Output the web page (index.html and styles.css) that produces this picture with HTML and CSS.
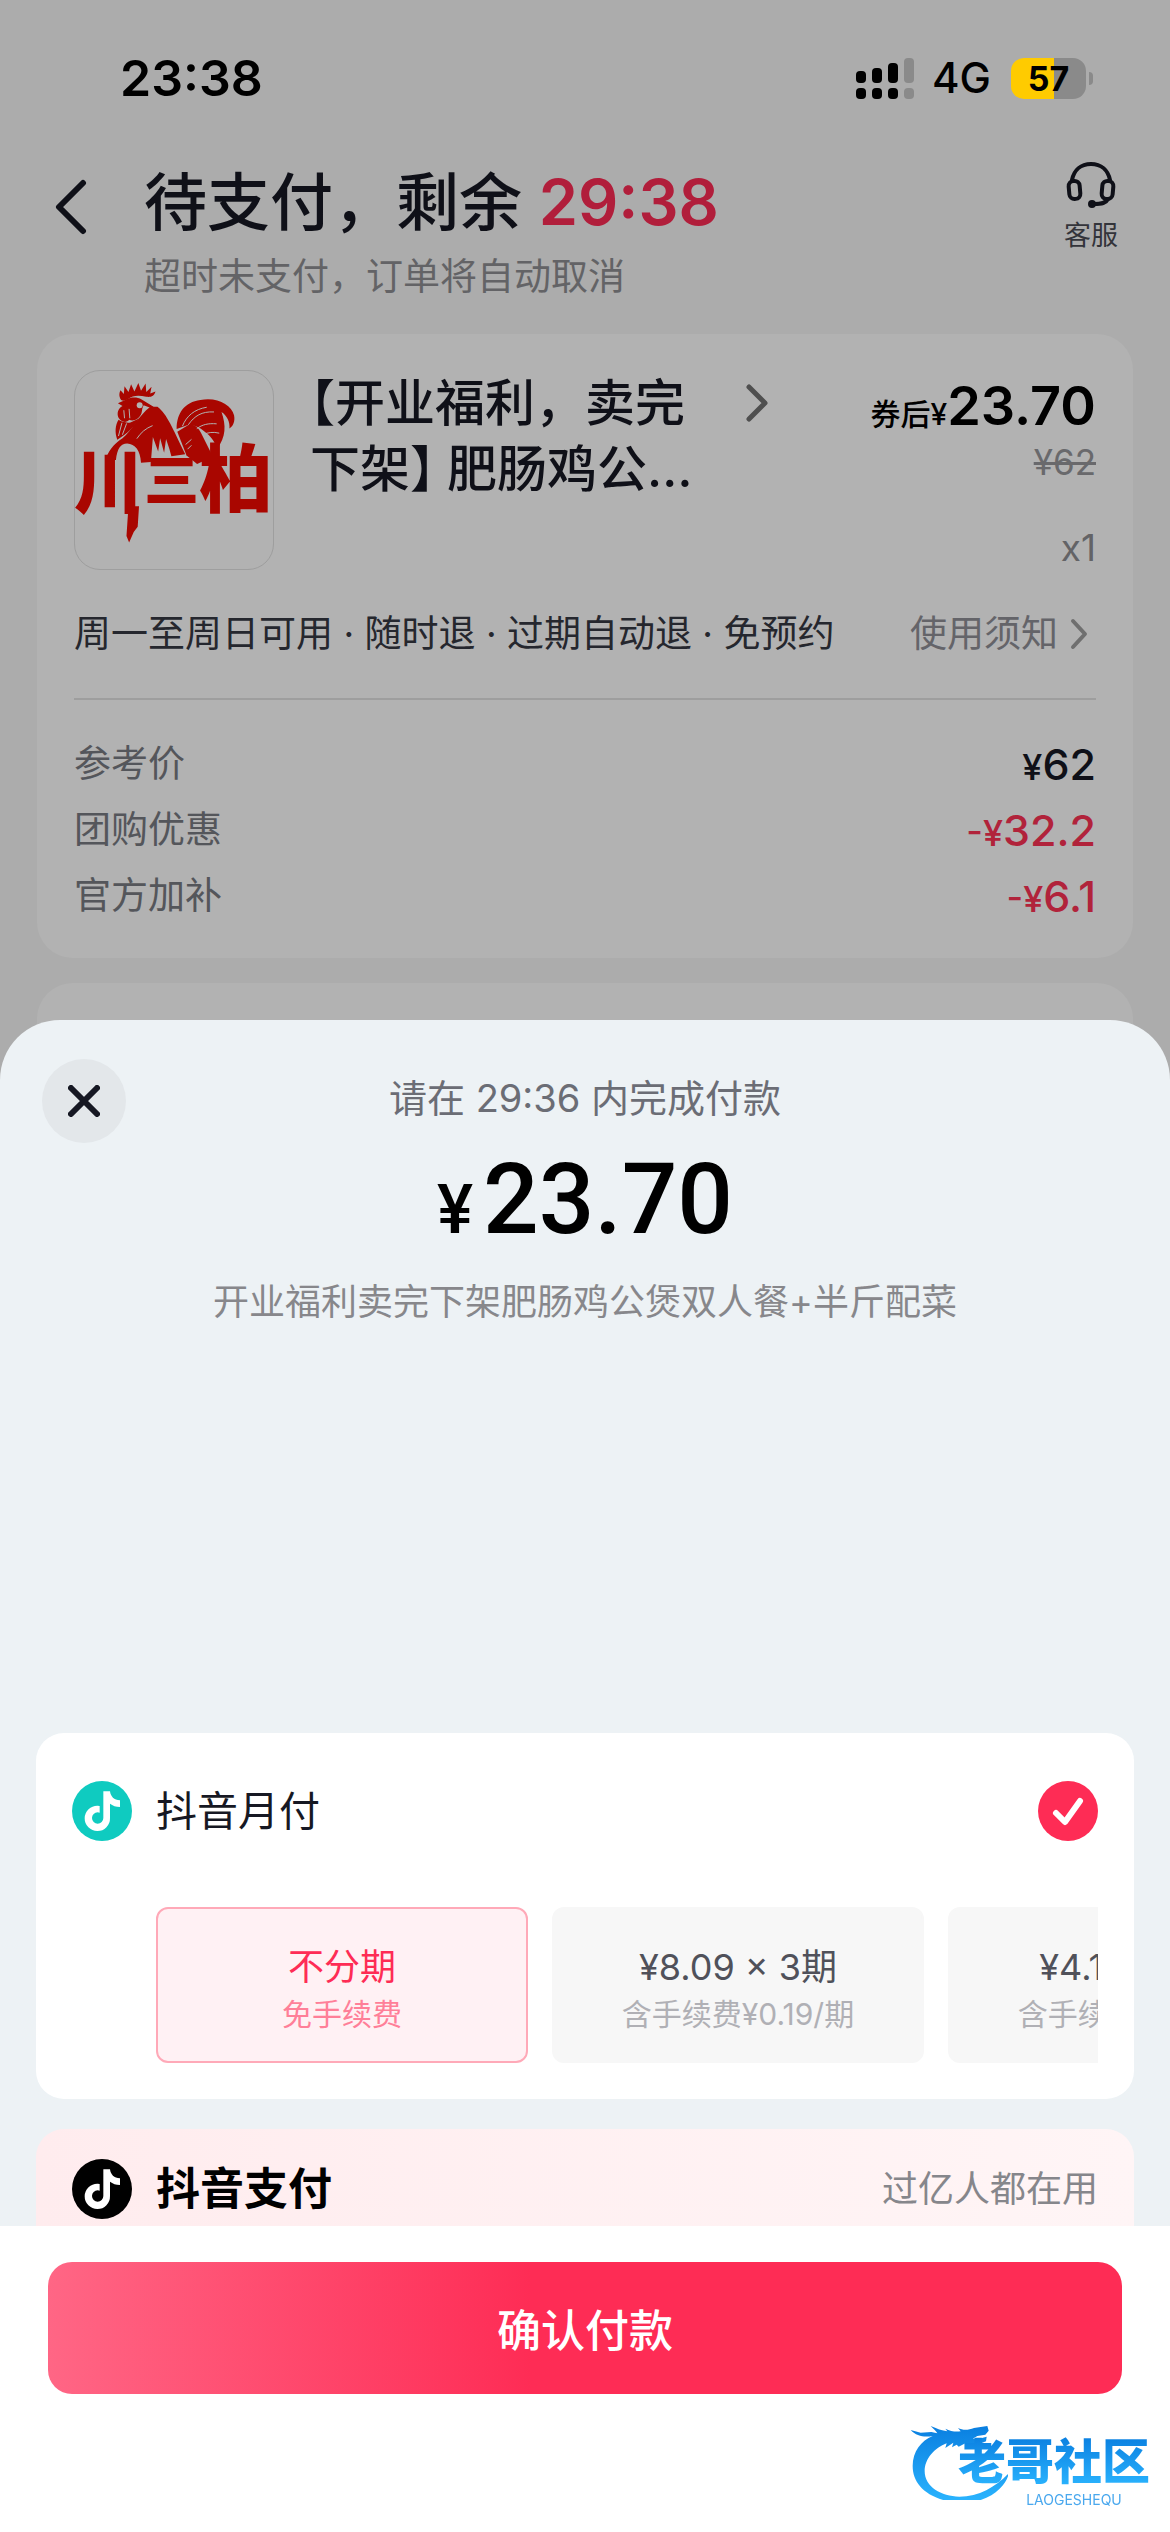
FILE: index.html
```html
<!DOCTYPE html>
<html lang="zh-CN">
<head>
  <meta charset="UTF-8" />
  <meta name="viewport" content="width=device-width, initial-scale=1.0"/>
  <title>待支付</title>
  <link rel="stylesheet" href="styles.css">
</head>
<body>

  <div class="order">
    <div class="status">
      <span class="time">23:38</span>
      <div class="status-right">
        <svg width="58" height="41" viewBox="0 0 58 41">
          <g fill="#000">
            <rect x="0" y="13" width="10" height="12" rx="4"/>
            <rect x="0" y="30" width="10" height="11" rx="4"/>
            <rect x="16" y="10" width="10" height="15" rx="4"/>
            <rect x="16" y="30" width="10" height="11" rx="4"/>
            <rect x="32" y="5" width="10" height="20" rx="4"/>
            <rect x="32" y="30" width="10" height="11" rx="4"/>
          </g>
          <g fill="#8a8a8a">
            <rect x="48" y="0" width="10" height="25" rx="4"/>
            <rect x="48" y="30" width="10" height="11" rx="4"/>
          </g>
        </svg>
        <span class="network">4G</span>
        <div class="battery">57</div>
      </div>
    </div>

    <header class="header">
      <button class="back" aria-label="返回">
        <svg width="32" height="56" viewBox="0 0 32 56" fill="none" stroke="#161823" stroke-width="6" stroke-linecap="round" stroke-linejoin="round"><path d="M28 4L4 28l24 24"/></svg>
      </button>
      <div class="header-text">
        <h1>待支付，剩余 <span class="countdown">29:38</span></h1>
        <p>超时未支付，订单将自动取消</p>
      </div>
      <a class="service" href="#">
        <svg width="50" height="48" viewBox="0 0 50 48" fill="none" stroke="#161823" stroke-width="4" stroke-linecap="round">
          <path d="M6 18C8 8 15 2 25 2s17 6 19 16"/>
          <rect x="3" y="19" width="11" height="18" rx="5" transform="rotate(-5 8 28)"/>
          <rect x="36" y="19" width="11" height="18" rx="5" transform="rotate(5 42 28)"/>
          <path d="M42 37c-2 4-6 5-14 5"/>
          <circle cx="26" cy="42" r="2"/>
        </svg>
        <span>客服</span>
      </a>
    </header>

    <section class="card">
      <div class="product">
        <svg class="thumb" viewBox="40 30 600 600">
          <g fill="#f30a00">
            <!-- comb and head -->
            <path d="M180 118c-8-12-6-22-2-30l10 12 2-24 12 18 8-24 10 22 12-26 8 24 14-22 2 26 16-16-4 20 16-6c-4 14-14 18-28 16-24-6-42-4-54 6-8 6-16 8-22 4z"/>
            <path d="M170 128l26-12c14-8 32-8 46 0l36 22-8 4-22-8c-8 14-2 26-14 36-10 10-20 12-30 8-8 10-24 8-32-6-6-14-2-28 12-36z"/>
            <path d="M172 178c10 6 22 10 36 8l26-12c-12 22-34 46-66 64-8-22-6-44 4-60z"/>
            <!-- body -->
            <path d="M132 302c8-28 24-50 52-68 30-26 46-66 84-96h22c30 24 44 62 84 144l-42 6-6-22-10-30-6 42-12-44-6 40-16-44-6 76-30 2c-2-38-18-56-42-58-20 0-30 16-34 50z"/>
            <!-- tail -->
            <path d="M348 206c0-48 24-82 72-88 50-10 94 14 102 46 4 20-4 34-14 40 2-18-6-38-24-50 14 40 14 76-14 112-4-16-14-34-32-48-16-14-34-26-56-24z"/>
            <path d="M350 214l36-22c18 0 28 10 36 26l36 72-48 22-32-26z"/>
          </g>
          <g fill="none" stroke="#fff" stroke-width="3" stroke-linecap="round">
            <path d="M366 196c12-30 36-50 72-56"/>
            <path d="M384 192c18-26 40-40 76-38"/>
            <path d="M410 204c16-12 34-16 58-14"/>
            <path d="M430 222c14-6 28-8 46-4"/>
            <path d="M228 234c12-18 26-30 46-38"/>
            <path d="M376 252l16-14M382 266l10-10"/>
            <path d="M182 188l-10 38M196 190l-12 32M188 150l2 22M204 146l2 26"/>
          </g>
          <circle cx="236" cy="134" r="9" fill="#fff"/>
          <g fill="#f30a00" class="brand">
            <text x="36" y="444" font-size="210">川</text>
            <text x="250" y="420" font-size="166">三</text>
            <text x="416" y="440" font-size="224">柏</text>
          </g>
          <path fill="#f30a00" d="M202 440h32l-4 62-12 16-14 32-8-20z"/>
        </svg>
        <h2><span class="bracket">【</span>开业福利，卖完<br>下架<span class="bracket close-bracket">】</span>肥肠鸡公…</h2>
        <a class="more" href="#" aria-label="商品详情">
          <svg width="24" height="38" viewBox="0 0 24 38" fill="none" stroke="#717171" stroke-width="5" stroke-linecap="round" stroke-linejoin="round"><path d="M4 3l16 16L4 35"/></svg>
        </a>
        <div class="price">
          <div class="price-now"><small>券后¥</small>23.70</div>
          <del>¥62</del>
          <span class="count">x1</span>
        </div>
      </div>

      <div class="rules">
        <span>周一至周日可用 · 随时退 · 过期自动退 · 免预约</span>
        <a href="#">使用须知
          <svg width="18" height="32" viewBox="0 0 18 32" fill="none" stroke="#a0a0a0" stroke-width="4" stroke-linecap="round" stroke-linejoin="round"><path d="M3 3l12 13L3 29"/></svg>
        </a>
      </div>

      <dl class="fees">
        <div><dt>参考价</dt><dd><small>¥</small>62</dd></div>
        <div class="minus"><dt>团购优惠</dt><dd><small>-¥</small>32.2</dd></div>
        <div class="minus"><dt>官方加补</dt><dd><small>-¥</small>6.1</dd></div>
      </dl>
    </section>

    <section class="card card-next"></section>
  </div>

  <main class="sheet">
    <div class="sheet-top">
      <button class="close" aria-label="关闭">
        <svg width="32" height="32" viewBox="0 0 32 32" stroke="#161823" stroke-width="6" stroke-linecap="round"><path d="M3 3l26 26M29 3L3 29"/></svg>
      </button>
      <p>请在 29:36 内完成付款</p>
    </div>
    <div class="amount"><small>¥</small>23.70</div>
    <p class="desc">开业福利卖完下架肥肠鸡公煲双人餐+半斤配菜</p>

    <div class="methods">
      <section class="method">
        <div class="method-row">
          <svg width="60" height="60" viewBox="36 63 180 180">
            <circle cx="126" cy="153" r="90" fill="#0fcbc0"/>
            <path fill="#fff" d="M130 94h20c2 16 12 26 30 27v20c-12 0-22-4-30-10v43A38 38 0 1 1 113 137l6 1v20l-6-1a17 17 0 1 0 17 17z"/>
          </svg>
          <label for="monthly">抖音月付</label>
          <div class="check">
            <input type="radio" name="method" id="monthly" checked>
            <svg width="60" height="60" viewBox="0 0 60 60" fill="none" stroke="#fff" stroke-width="6" stroke-linecap="round" stroke-linejoin="round"><path d="M18 32l9 9 15-21"/></svg>
          </div>
        </div>
        <div class="plans">
          <button class="plan active"><span>不分期</span><small>免手续费</small></button>
          <button class="plan"><span>¥8.09 × 3期</span><small>含手续费¥0.19/期</small></button>
          <button class="plan"><span>¥4.14 × 6期</span><small>含手续费¥0.19/期</small></button>
        </div>
      </section>

      <section class="method method-pay">
        <div class="method-row">
          <svg width="60" height="60" viewBox="36 63 180 180">
            <circle cx="126" cy="153" r="90" fill="#000"/>
            <path fill="#fff" d="M130 94h20c2 16 12 26 30 27v20c-12 0-22-4-30-10v43A38 38 0 1 1 113 137l6 1v20l-6-1a17 17 0 1 0 17 17z"/>
          </svg>
          <strong>抖音支付</strong>
          <span class="hint">过亿人都在用</span>
        </div>
      </section>
    </div>

    <footer>
      <button class="confirm">确认付款</button>
    </footer>
  </main>

  <div class="watermark">
    <svg width="98" height="80" viewBox="58 66 294 240">
      <defs>
        <linearGradient id="blue" x1="0" y1="0" x2="0" y2="1">
          <stop offset="0" stop-color="#0a7fe0"/>
          <stop offset="1" stop-color="#2bb5ff"/>
        </linearGradient>
      </defs>
      <path fill="url(#blue)" d="M60 96l30 8 32-2 18 4c-4-8-12-14-20-22 18 8 34 14 50 16l-6-8c16 8 30 10 46 8l-8-10c16 8 32 6 48 0l40-6 4 14-10 12-24 4-14 8 28-2 14-4-2 14-20 8-24-2-6 8-12-8-20 10-6-6-14 8 4-14-24 16 4-14c-36 14-66 46-66 84 0 46 50 76 104 76 60 0 110-30 148-70-4 30-50 90-148 90C110 304 66 260 66 204c0-44 26-76 60-90-24 4-48 2-66-18z"/>
    </svg>
    <div class="watermark-text">
      <b>老哥社区</b>
      <span>LAOGESHEQU</span>
    </div>
  </div>

</body>
</html>
```
FILE: styles.css
```css
* {
  margin: 0;
  padding: 0;
  box-sizing: border-box;
}

body {
  font-family: Inter, 'Noto Sans CJK SC', sans-serif;
  background: #fff;
  color: #161823;
  display: flex;
  flex-direction: column;
  height: 100vh;
  overflow: hidden;
  font-size: 37px;
  line-height: 44px;
}

a {
  color: inherit;
  text-decoration: none;
}

button {
  font-family: inherit;
  border: none;
  background: none;
  cursor: pointer;
}

svg {
  display: block;
  flex-shrink: 0;
}

small {
  line-height: 1;
}

/* order page behind the sheet */
.order {
  position: relative;
  background: #f7f7f7;
}

.order::after {
  content: '';
  position: absolute;
  inset: 0;
  background: rgba(0,0,0,0.3);
}

.status {
  position: relative;
  z-index: 1;
  display: flex;
  justify-content: space-between;
  align-items: center;
  padding: 46px 84px 0 120px;
  color: #000;
  line-height: 64px;
}

.time {
  font-size: 50px;
  font-weight: 600;
}

.status-right {
  display: flex;
  align-items: center;
}

.network {
  margin: 0 20px 0 18px;
  font-size: 42px;
  font-weight: 500;
}

.battery {
  position: relative;
  width: 75px;
  height: 41px;
  border-radius: 13px;
  background: linear-gradient(90deg, #ffcb00 57%, #8a8a8a 57%);
  font-size: 34px;
  font-weight: 700;
  line-height: 41px;
  text-align: center;
}

.battery::after {
  content: '';
  position: absolute;
  left: 78px;
  top: 14px;
  width: 4px;
  height: 13px;
  border-radius: 0 4px 4px 0;
  background: #8a8a8a;
}

.header {
  display: flex;
  align-items: flex-start;
  padding: 52px 52px 35px 55px;
}

.back {
  display: flex;
  align-items: center;
  height: 90px;
  margin-right: 57px;
}

.header-text {
  flex: 1;
}

h1 {
  margin-bottom: 13px;
  font-size: 63px;
  font-weight: 500;
  line-height: 80px;
}

.countdown {
  color: #fe2c55;
  font-weight: 600;
}

.header-text p {
  color: #8f8f93;
}

.service {
  display: flex;
  flex-direction: column;
  align-items: center;
  gap: 8px;
  color: #4a4b53;
  font-size: 27px;
  line-height: 36px;
}

.card {
  margin: 0 37px 25px;
  padding: 36px 37px 29px;
  border-radius: 36px;
  background: #fff;
}

.card-next {
  height: 97px;
  margin-bottom: 0;
}

.product {
  display: flex;
}

.thumb {
  width: 200px;
  height: 200px;
  margin-right: 36px;
  border: 1px solid #e2e2e2;
  border-radius: 26px;
}

.brand {
  font-family: 'Noto Sans CJK SC', sans-serif;
  font-weight: 900;
}

h2 {
  font-size: 50px;
  font-weight: 500;
  line-height: 66px;
  white-space: nowrap;
}

.bracket {
  font-feature-settings: 'halt';
}

.close-bracket {
  margin-right: 12px;
}

.more {
  display: flex;
  align-items: center;
  height: 66px;
  margin-left: 52px;
}

.price {
  display: flex;
  flex-direction: column;
  align-items: flex-end;
  margin-left: auto;
}

.price-now {
  color: #000;
  font-size: 54px;
  font-weight: 600;
  line-height: 72px;
}

.price-now small {
  font-size: 30px;
  font-weight: 500;
}

.price del {
  color: #97979b;
  font-size: 35px;
  line-height: 40px;
}

.count {
  margin-top: auto;
  color: #8f8f93;
}

.rules {
  display: flex;
  justify-content: space-between;
  margin-top: 42px;
  padding-bottom: 42px;
  border-bottom: 2px solid #e2e2e2;
  color: #363843;
}

.rules a {
  display: flex;
  align-items: center;
  gap: 12px;
  padding-right: 8px;
  color: #909097;
}

.fees {
  padding-top: 31px;
  line-height: 66px;
}

.fees div {
  display: flex;
  justify-content: space-between;
  height: 66px;
}

.fees dt {
  color: #797b83;
}

.fees dd {
  font-size: 43px;
  font-weight: 500;
}

.fees small {
  font-size: 36px;
}

.fees .minus dd {
  color: #fe3355;
}

/* payment sheet */
.sheet {
  position: relative;
  z-index: 2;
  flex: 1;
  min-height: 0;
  display: flex;
  flex-direction: column;
  margin-top: -60px;
  border-radius: 60px 60px 0 0;
  background: #edf2f5;
}

.sheet-top {
  display: grid;
  grid-template-columns: 84px 1fr 84px;
  padding: 39px 42px 0;
}

.close {
  display: flex;
  align-items: center;
  justify-content: center;
  height: 84px;
  border-radius: 50%;
  background: #e3e7ea;
}

.sheet-top p {
  color: #6b6d75;
  font-size: 38px;
  line-height: 78px;
  text-align: center;
}

.amount {
  color: #000;
  font-family: Roboto, sans-serif;
  font-size: 98px;
  font-weight: 500;
  line-height: 114px;
  text-align: center;
}

.amount small {
  margin-right: 10px;
  font-size: 68px;
}

.desc {
  margin-top: 21px;
  color: #87878b;
  font-size: 36px;
  line-height: 48px;
  text-align: center;
}

.methods {
  flex: 1;
  min-height: 0;
  margin-top: 407px;
  padding: 0 36px;
  overflow: hidden;
}

.method {
  margin-bottom: 30px;
  padding: 48px 36px 36px;
  border-radius: 28px;
  background: #fff;
}

.method-row {
  display: flex;
  align-items: center;
  gap: 24px;
  height: 60px;
}

.method-row label {
  flex: 1;
  font-size: 41px;
}

.check {
  position: relative;
  width: 60px;
  height: 60px;
}

.check input {
  appearance: none;
  display: block;
  width: 60px;
  height: 60px;
  border-radius: 50%;
  background: #fe2c55;
}

.check svg {
  position: absolute;
  inset: 0;
  pointer-events: none;
}

.plans {
  display: flex;
  gap: 24px;
  margin: 66px 0 0 84px;
  overflow: hidden;
}

.plan {
  flex: 0 0 372px;
  padding: 32px 0 26px;
  border: 2px solid #f7f7f7;
  border-radius: 12px;
  background: #f7f7f7;
  color: #50515a;
}

.plan span {
  display: block;
  font-size: 36px;
  line-height: 52px;
}

.plan small {
  display: block;
  color: #b0b0b5;
  font-size: 30px;
  line-height: 42px;
}

.plan.active {
  border-color: #ffa9b8;
  background: #fff1f4;
  color: #fe2c55;
}

.plan.active small {
  color: #ff7f98;
}

.method-pay {
  padding-top: 30px;
  background: linear-gradient(90deg, #ffecee, #fff5f6);
}

.method-row strong {
  flex: 1;
  color: #000;
  font-size: 44px;
  font-weight: 700;
}

.hint {
  color: #86868b;
  font-size: 36px;
}

footer {
  padding: 36px 48px 138px;
  background: #fff;
}

.confirm {
  display: block;
  width: 100%;
  height: 132px;
  border-radius: 24px;
  background: linear-gradient(90deg, #ff6685, #fe2c55 45%);
  color: #fff;
  font-size: 44px;
  font-weight: 500;
}

.watermark {
  position: fixed;
  z-index: 3;
  right: 20px;
  bottom: 24px;
  display: flex;
}

.watermark-text {
  display: flex;
  flex-direction: column;
  align-items: center;
  margin: 16px 0 0 -50px;
}

.watermark b {
  font-size: 48px;
  font-weight: 900;
  line-height: 52px;
  color: transparent;
  background: linear-gradient(#0a7fe0, #2bb5ff);
  background-clip: text;
}

.watermark span {
  margin-top: 4px;
  padding-left: 40px;
  color: #4aa8ee;
  font-size: 14px;
  line-height: 16px;
}
```
